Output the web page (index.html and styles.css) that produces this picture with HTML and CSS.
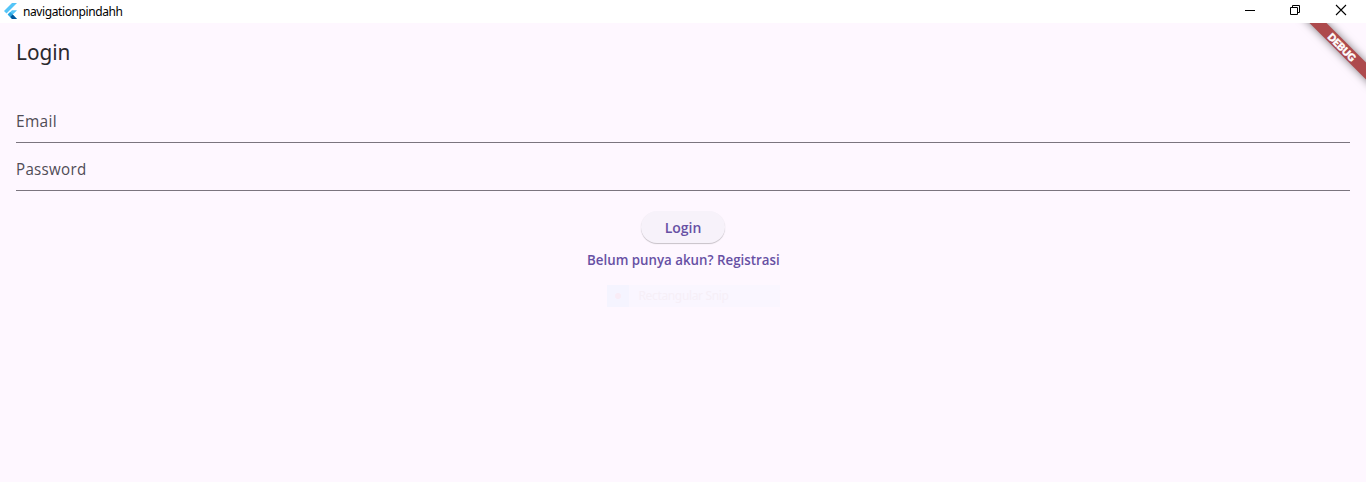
FILE: index.html
```html
<!DOCTYPE html>
<html lang="id">
<head>
<meta charset="utf-8">
<title>navigationpindahh</title>
<link rel="stylesheet" href="styles.css">
</head>
<body>
<header class="titlebar">
  <svg class="logo" width="13" height="16" viewBox="0 0 13 16">
    <path d="M8 0h5L2.500 10.500 0 8z" fill="#54c5f8"/>
    <path d="M8 7.300h5L8.700 11.600 13 16H8l-4.300-4.400z" fill="#54c5f8"/>
    <path d="M6.200 9.100l2.500 2.500L6.200 14.100l-2.500-2.500z" fill="#29a5e0"/>
    <path d="M6.200 14.100l2.500-2.500L13 16H8z" fill="#01579b"/>
  </svg>
  <span class="window-name">navigationpindahh</span>
  <div class="controls">
    <svg width="46" height="23"><path d="M19 10.500h10" stroke="#000"/></svg>
    <svg width="46" height="23"><path d="M18.500 7.500h7v7h-7zM20.500 7.500v-2h7v7h-2" fill="none" stroke="#000"/></svg>
    <svg width="46" height="23"><path d="M18 5l10 10M28 5L18 15" stroke="#000" stroke-width="1.100"/></svg>
  </div>
</header>
<main class="app">
  <div class="debug"><span class="debug-band">DEBUG</span></div>
  <h1 class="heading"><span>Login</span></h1>
  <form class="form">
    <label class="field"><span class="email">Email</span></label>
    <label class="field"><span class="password">Password</span></label>
    <button class="login" type="button"><span>Login</span></button>
    <a class="register"><span>Belum punya akun? Registrasi</span></a>
    <div class="snip">
      <span class="snip-icon"><i class="dot"></i></span>
      <span class="snip-text">Rectangular Snip</span>
    </div>
  </form>
</main>
</body>
</html>
```
FILE: styles.css
```css
* { box-sizing: border-box; }
body {
  margin: 0;
  height: 482px;
  overflow: hidden;
  display: flex;
  flex-direction: column;
  background: #fef7ff;
  font-family: "Noto Sans", "Open Sans", sans-serif;
}
.titlebar {
  height: 23px;
  flex: none;
  display: flex;
  background: #fff;
}
.logo { margin: 3px 0 0 4px; }
.window-name {
  margin-left: 6px;
  font-size: 12px;
  line-height: 24px;
  letter-spacing: -0.4px;
  color: #000;
}
.controls { display: flex; margin-left: auto; margin-right: 2px; }
.app {
  position: relative;
  flex: 1;
  overflow: hidden;
  color: #1d1b20;
}
.debug {
  position: absolute;
  top: 0;
  right: 0;
  width: 80px;
  height: 80px;
  overflow: hidden;
}
.debug-band {
  position: absolute;
  left: 6px;
  top: 18px;
  width: 100px;
  height: 12px;
  transform: rotate(45deg);
  background: #ad4a4d;
  box-shadow: 0 0 9px rgba(0, 0, 0, 0.5);
  color: #fff;
  font: 900 10px/12px Lato, sans-serif;
  -webkit-text-stroke: 0.5px #fff;
  text-align: center;
}
.heading {
  margin: 0;
  height: 56px;
  padding-left: 16px;
  font-size: 22px;
  font-weight: 370;
  line-height: 57px;
  color: #2b292e;
}
.heading span, .email, .password, .login span, .register span {
  display: inline-block;
  transform-origin: left;
}
.heading span { transform: scaleX(0.945); }
.form {
  display: flex;
  flex-direction: column;
  align-items: center;
  padding: 16px 16px 0;
}
.field {
  width: 100%;
  height: 48px;
  border-bottom: 1px solid #7b757f;
  font-family: "Open Sans", "Noto Sans", sans-serif;
  font-size: 15.5px;
  line-height: 52px;
  letter-spacing: 0.3px;
  color: #504c56;
}
.password { transform: scaleX(0.975); }
.login {
  width: 84px;
  height: 32px;
  margin-top: 20px;
  padding: 0;
  border: 0;
  border-radius: 16px;
  background: #f7f2fa;
  box-shadow: 0 1px 1px rgba(0, 0, 0, 0.22);
  color: #6750a4;
  font: 600 14px/34px "Open Sans", "Noto Sans", sans-serif;
}
.login span { transform-origin: center; }
.register span { transform-origin: center; transform: scaleX(0.95); }
.register {
  height: 32px;
  color: #6750a4;
  font-family: "Open Sans", "Noto Sans", sans-serif;
  font-size: 14px;
  font-weight: 600;
  line-height: 34px;
  white-space: nowrap;
}
.snip {
  display: flex;
  width: 173px;
  height: 22px;
  margin: 10px 0 0 20px;
  background: #faf6ff;
  color: #f6eff7;
}
.snip-icon {
  display: flex;
  align-items: center;
  justify-content: center;
  width: 22px;
  background: #f5f4ff;
}
.dot { width: 6px; height: 6px; border-radius: 50%; background: #f9ecf6; }
.snip-text { margin-left: 10px; font-size: 12px; line-height: 22px; letter-spacing: -0.35px; }
```
